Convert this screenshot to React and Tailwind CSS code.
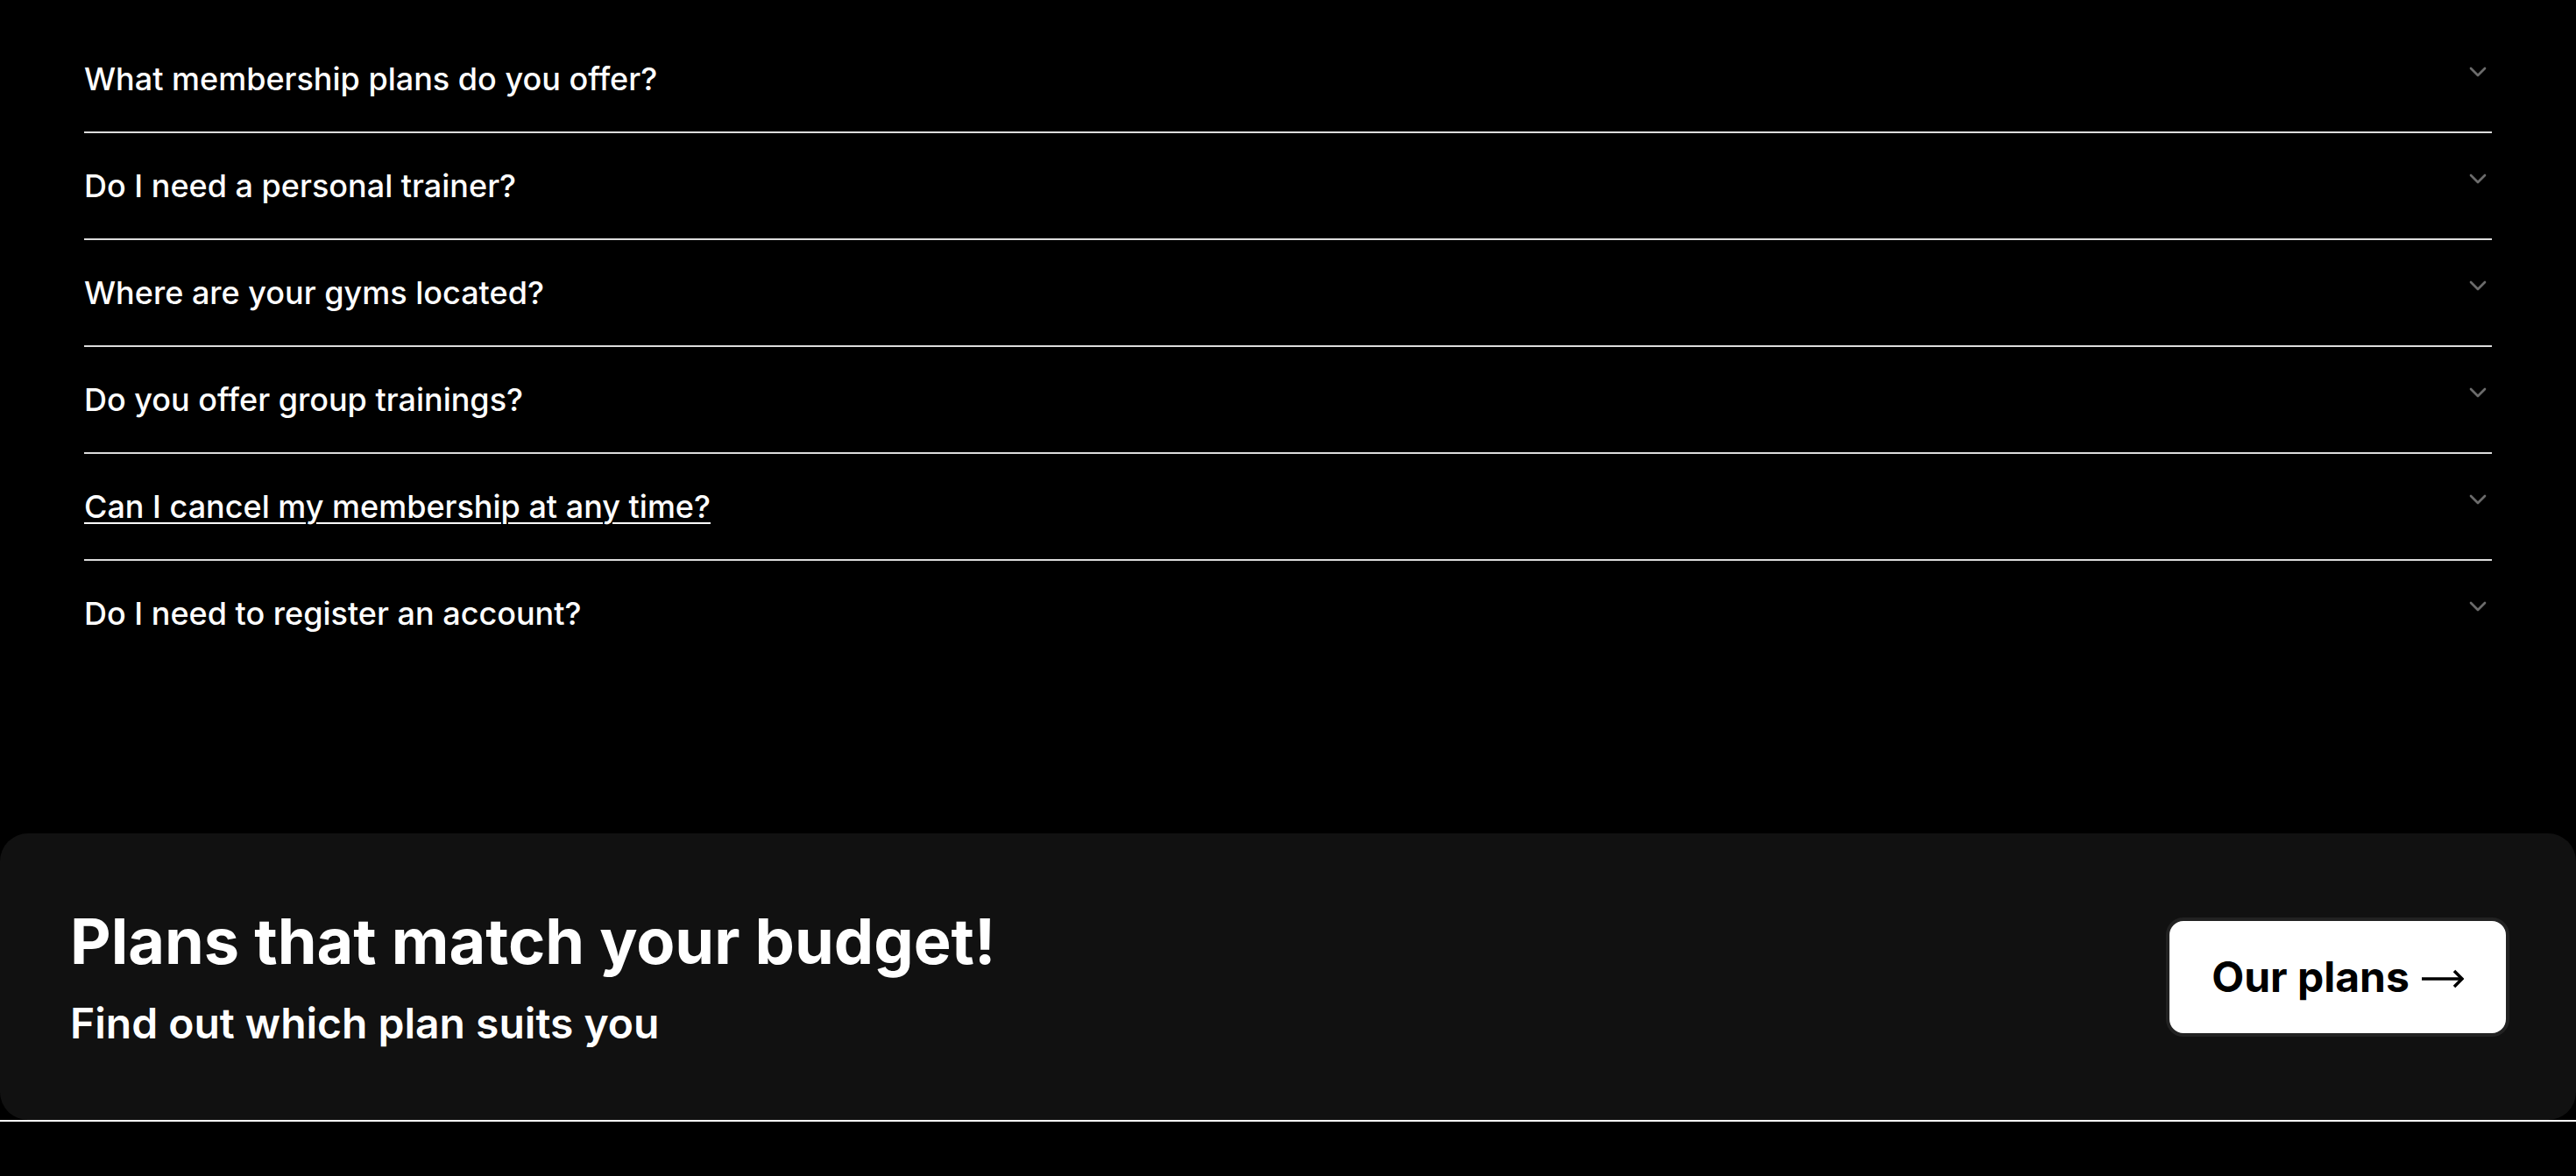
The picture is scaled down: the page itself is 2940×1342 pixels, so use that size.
import React from "react";
import { ChevronDown } from "lucide-react";

const questions = [
  "What membership plans do you offer?",
  "Do I need a personal trainer?",
  "Where are your gyms located?",
  "Do you offer group trainings?",
  "Can I cancel my membership at any time?",
  "Do I need to register an account?",
];

export default function App() {
  return (
    <div className="min-h-screen bg-black font-['Inter',sans-serif] text-white">
      <section className="px-[96px] pt-[30px]">
        {questions.map((q, i) => (
          <div
            key={q}
            className={i < questions.length - 1 ? "border-b-2 border-[#dcdcdc]" : ""}
          >
            <button className="flex w-full items-start justify-between py-[36px] text-left">
              <span
                className={
                  "text-[36px] leading-[48px] font-medium text-white" +
                  (i === 4 ? " underline decoration-2 underline-offset-[5px]" : "")
                }
              >
                {q}
              </span>
              <ChevronDown
                size={32}
                strokeWidth={2}
                className="shrink-0 text-[#6b6b6b]"
              />
            </button>
          </div>
        ))}
      </section>

      <div className="mt-[191px] flex h-[327px] items-center justify-between rounded-[32px] bg-[#111111] pl-[80px] pr-[76px]">
        <div className="flex flex-col">
          <h2 className="text-[72px] leading-none font-bold text-white">
            Plans that match your budget!
          </h2>
          <p className="mt-[34px] text-[48px] leading-none font-semibold text-white">
            Find out which plan suits you
          </p>
        </div>
        <button className="flex h-[136px] w-[392px] items-center justify-center rounded-[20px] border-4 border-[#222222] bg-white text-[48px] leading-none font-bold text-black">
          Our plans
          <svg
            width="48"
            height="22"
            viewBox="0 0 48 22"
            className="ml-[14px] mt-[4px]"
            fill="none"
            stroke="currentColor"
          >
            <path d="M0 11 H45" strokeWidth="3.5" />
            <path d="M37 2 L46 11 L37 20" strokeWidth="3.5" strokeLinejoin="miter" />
          </svg>
        </button>
      </div>
      <div className="h-[2px] bg-white" />
      <div className="h-[62px] bg-black" />
    </div>
  );
}
